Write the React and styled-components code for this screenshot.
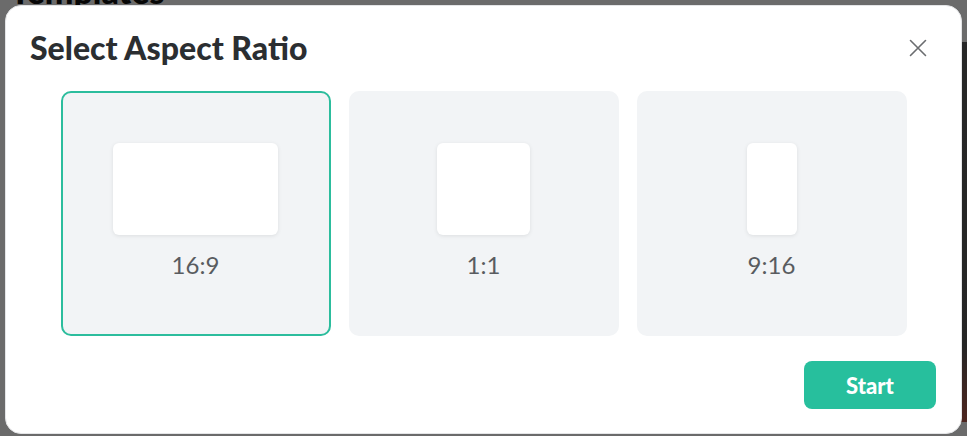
import React, { useState } from "react";
import styled, { createGlobalStyle } from "styled-components";

const GlobalStyle = createGlobalStyle`
  html, body { margin: 0; padding: 0; }
  body {
    background: #ffffff;
    font-family: "Lato", "Noto Sans", sans-serif;
    overflow: hidden;
  }
`;

const Page = styled.div`
  width: 967px;
  height: 436px;
  display: flex;
  flex-direction: column;
  background: #ffffff;
`;

const PageTitle = styled.h1`
  margin: -29px 0 0 10px;
  font-size: 34px;
  line-height: 40px;
  font-weight: 900;
  color: #111;
`;

const Gallery = styled.div`
  flex: 1;
  display: flex;
  justify-content: flex-end;
  padding-top: 31px;
`;

const Thumb = styled.div`
  width: 40px;
  height: 380px;
  background: linear-gradient(180deg, #5e5e5e 0%, #5a5a5a 80%, #b8584a 100%);
`;

const Overlay = styled.div`
  position: fixed;
  inset: 0;
  background: rgba(0, 0, 0, 0.58);
  padding: 5px;
  box-sizing: border-box;
`;

const Dialog = styled.div`
  width: 957px;
  height: 429px;
  box-sizing: border-box;
  background: #ffffff;
  border: 1px solid #e4e5e7;
  border-radius: 16px;
  display: flex;
  flex-direction: column;
  padding: 24px 25px 24px 25px;
`;

const Header = styled.div`
  display: flex;
  align-items: center;
  justify-content: space-between;
  height: 36px;
`;

const Title = styled.h2`
  margin: 0 0 0 -1px;
  font-size: 32px;
  line-height: 36px;
  font-weight: 900;
  color: #2b2e31;
  letter-spacing: 0;
`;

const CloseButton = styled.button`
  width: 24px;
  height: 24px;
  margin-right: 6px;
  padding: 0;
  border: none;
  background: none;
  display: flex;
  align-items: center;
  justify-content: center;
  cursor: pointer;
  color: #6b6d70;
`;

const Options = styled.div`
  display: grid;
  grid-template-columns: repeat(3, 270px);
  gap: 18px;
  justify-content: center;
  margin-top: 25px;
`;

const Option = styled.button`
  height: 245px;
  box-sizing: border-box;
  border-radius: 10px;
  background: #f2f4f6;
  border: 2px solid ${(p) => (p.$active ? "#2cbd9d" : "transparent")};
  display: flex;
  flex-direction: column;
  align-items: center;
  padding: 50px 0 0;
  cursor: pointer;
  font-family: inherit;
`;

const PreviewSlot = styled.div`
  height: 92px;
  display: flex;
  align-items: center;
  justify-content: center;
`;

const Preview = styled.div`
  height: 92px;
  background: #ffffff;
  border-radius: 6px;
  box-shadow: 0 1px 4px rgba(0, 0, 0, 0.09);
`;

const Label = styled.span`
  margin-top: 15px;
  font-size: 24px;
  line-height: 30px;
  font-weight: 400;
  color: #595c60;
`;

const Footer = styled.div`
  display: flex;
  justify-content: flex-end;
  margin-top: 25px;
`;

const StartButton = styled.button`
  width: 132px;
  height: 48px;
  border: none;
  border-radius: 8px;
  background: #27bf9d;
  color: #ffffff;
  font-family: "Lato", sans-serif;
  font-size: 22px;
  font-weight: 900;
  cursor: pointer;
`;

const ratios = [
  { label: "16:9", w: 165 },
  { label: "1:1", w: 93 },
  { label: "9:16", w: 50 },
];

export default function App() {
  const [selected, setSelected] = useState("16:9");
  return (
    <>
      <GlobalStyle />
      <Page>
        <PageTitle>Templates</PageTitle>
        <Gallery>
          <Thumb />
        </Gallery>
      </Page>
      <Overlay>
        <Dialog>
          <Header>
            <Title>Select Aspect Ratio</Title>
            <CloseButton aria-label="Close">
              <svg width="18" height="18" viewBox="0 0 18 18" fill="none">
                <path d="M1.5 1.5L16.5 16.5M16.5 1.5L1.5 16.5" stroke="currentColor" strokeWidth="1.6" strokeLinecap="round" />
              </svg>
            </CloseButton>
          </Header>
          <Options>
            {ratios.map((r) => (
              <Option
                key={r.label}
                $active={selected === r.label}
                onClick={() => setSelected(r.label)}
              >
                <PreviewSlot>
                  <Preview style={{ width: r.w }} />
                </PreviewSlot>
                <Label>{r.label}</Label>
              </Option>
            ))}
          </Options>
          <Footer>
            <StartButton>Start</StartButton>
          </Footer>
        </Dialog>
      </Overlay>
    </>
  );
}
